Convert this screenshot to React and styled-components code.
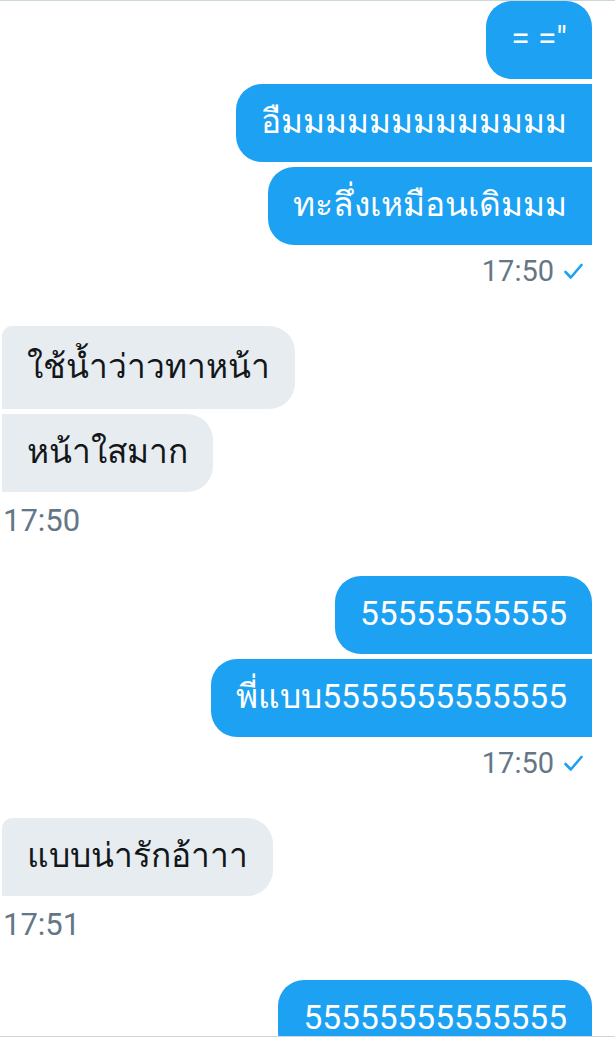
import styled, { createGlobalStyle } from "styled-components";

const GlobalStyle = createGlobalStyle`
  html, body {
    margin: 0;
    padding: 0;
    background: #ffffff;
  }
  body {
    font-family: Roboto, "Noto Sans", "DejaVu Sans", sans-serif;
  }
`;

const Screen = styled.div`
  width: 615px;
  height: 1037px;
  overflow: hidden;
  box-sizing: border-box;
  border-top: 1px solid #ccd6dd;
  border-bottom: 1px solid #ccd6dd;
  background: #fff;
`;

const Thread = styled.div`
  display: flex;
  flex-direction: column;
`;

const Group = styled.div`
  display: flex;
  flex-direction: column;
  align-items: ${(p) => (p.$mine ? "flex-end" : "flex-start")};
  gap: 5px;
  padding: ${(p) => (p.$mine ? "0 23px 0 0" : "0 0 0 2px")};
  margin-bottom: ${(p) => (p.$mine ? "37px" : "38px")};
`;

const Bubble = styled.div`
  box-sizing: border-box;
  height: ${(p) => (p.$tall ? "83px" : "78px")};
  display: flex;
  align-items: center;
  padding: 0 25px 2px;
  font-size: 33.5px;
  line-height: 40px;
  white-space: nowrap;
  background: ${(p) => (p.$mine ? "#1da1f2" : "#e6ecf0")};
  color: ${(p) => (p.$mine ? "#ffffff" : "#14171a")};
  border-radius: ${(p) =>
    p.$mine
      ? `26px ${p.$first ? "26px" : "0"} 0 26px`
      : `${p.$first ? "10px" : "0"} 26px 26px 0`};
`;

const Meta = styled.div`
  display: flex;
  align-items: center;
  gap: 10px;
  height: 36px;
  margin-top: ${(p) => (p.$mine ? "3px" : "5px")};
  padding: ${(p) => (p.$mine ? "0 9px 0 0" : "0 0 0 1px")};
  font-size: ${(p) => (p.$mine ? "29px" : "31px")};
  color: #657786;
`;

const Check = () => (
  <svg width="19" height="17" viewBox="0 0 19 17" fill="none">
    <polyline
      points="1.5,9 6.8,14.5 17.5,2"
      stroke="#1da1f2"
      strokeWidth="2.6"
      strokeLinecap="round"
      strokeLinejoin="round"
    />
  </svg>
);

const groups = [
  { mine: true, time: "17:50", texts: ['= ="', "อืมมมมมมมมมมมมม", "ทะลึ่งเหมือนเดิมมม"] },
  { mine: false, time: "17:50", tall: 0, texts: ["ใช้น้ำว่าวทาหน้า", "หน้าใสมาก"] },
  { mine: true, time: "17:50", texts: ["55555555555", "พี่แบบ5555555555555"] },
  { mine: false, time: "17:51", texts: ["แบบน่ารักอ้าาา"] },
  { mine: true, texts: ["55555555555555"] },
];

export default function App() {
  return (
    <Screen>
      <GlobalStyle />
      <Thread>
        {groups.map((g, i) => (
          <Group key={i} $mine={g.mine}>
            {g.texts.map((t, j) => (
              <Bubble key={j} $mine={g.mine} $first={j === 0} $tall={g.tall === j}>
                {t}
              </Bubble>
            ))}
            {g.time && (
              <Meta $mine={g.mine}>
                {g.time}
                {g.mine && <Check />}
              </Meta>
            )}
          </Group>
        ))}
      </Thread>
    </Screen>
  );
}
